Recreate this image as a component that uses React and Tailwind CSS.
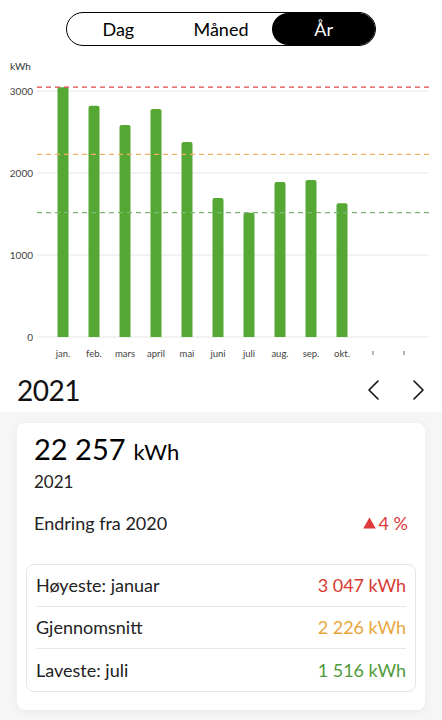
import { useState } from 'react';

const months = [
    { label: 'jan.', value: 3047 },
    { label: 'feb.', value: 2820 },
    { label: 'mars', value: 2585 },
    { label: 'april', value: 2780 },
    { label: 'mai', value: 2378 },
    { label: 'juni', value: 1695 },
    { label: 'juli', value: 1516 },
    { label: 'aug.', value: 1890 },
    { label: 'sep.', value: 1915 },
    { label: 'okt.', value: 1631 },
    { label: '', value: null },
    { label: '', value: null },
];

const ZERO = 337;
const SCALE = 0.082;
const yOf = (v) => ZERO - v * SCALE;

const font = { fontFamily: 'Lato, "Open Sans", sans-serif' };

function Chart() {
    return (
        <svg width="442" height="312" viewBox="0 56 442 312" className="block">
            <text x="10" y="70" fontSize="10" fill="#333">kWh</text>
            {[0, 1000, 2000, 3000].map((t) => (
                <g key={t}>
                    <line x1="37" x2="429" y1={yOf(t)} y2={yOf(t)} stroke="#e6e6e6" strokeWidth="1" />
                    <text x="33" y={yOf(t) + 3.5} fontSize="10" fill="#444" textAnchor="end">{t}</text>
                </g>
            ))}
            {months.map((m, i) => {
                const cx = 63 + i * 31;
                return (
                    <g key={i}>
                        {m.value && (
                            <path
                                d={`M${cx - 5.5} ${ZERO} V${yOf(m.value) + 2} Q${cx - 5.5} ${yOf(m.value)} ${cx - 3.5} ${yOf(m.value)} H${cx + 3.5} Q${cx + 5.5} ${yOf(m.value)} ${cx + 5.5} ${yOf(m.value) + 2} V${ZERO} Z`}
                                fill="#55a834"
                            />
                        )}
                        {m.label ? (
                            <text x={cx} y="357" fontSize="9.5" fill="#444" textAnchor="middle">{m.label}</text>
                        ) : (
                            <line x1={cx} x2={cx} y1="351" y2="355" stroke="#666" strokeWidth="1" />
                        )}
                    </g>
                );
            })}
            <line x1="37" x2="429" y1={yOf(3047)} y2={yOf(3047)} stroke="#e0464a" strokeWidth="1.3" strokeDasharray="5 4" />
            <line x1="37" x2="429" y1={yOf(2226)} y2={yOf(2226)} stroke="#f0b060" strokeWidth="1.3" strokeDasharray="5 4" />
            <line x1="37" x2="429" y1={yOf(1516)} y2={yOf(1516)} stroke="#7fb67a" strokeWidth="1.3" strokeDasharray="5 4" />
        </svg>
    );
}

function Chevron({ dir }) {
    return (
        <svg width="14" height="22" viewBox="0 0 14 22" fill="none" stroke="#111" strokeWidth="1.6" strokeLinecap="round" strokeLinejoin="round">
            {dir === 'left' ? <path d="M12 2L3 11l9 9" /> : <path d="M2 2l9 9-9 9" />}
        </svg>
    );
}

function StatRow({ label, value, color, last }) {
    return (
        <div className={`flex items-center justify-between h-[42px] ${last ? '' : 'border-b border-[#e8e8e8]'}`}>
            <span className="text-[18px] text-[#222]">{label}</span>
            <span className={`text-[18px] ${color}`}>{value}</span>
        </div>
    );
}

export default function App() {
    const [period, setPeriod] = useState('År');

    return (
        <div className="w-[442px] h-[720px] bg-[#f6f6f6] overflow-hidden" style={font}>
            <div className="bg-white">
                <div className="pt-3 flex justify-center">
                    <div className="flex w-[310px] h-[34px] rounded-full border-[1.5px] border-black">
                        {['Dag', 'Måned', 'År'].map((p) => (
                            <button
                                key={p}
                                onClick={() => setPeriod(p)}
                                className={`flex-1 rounded-full text-[18px] leading-none ${period === p ? 'bg-black text-white' : 'text-black'}`}
                            >
                                {p}
                            </button>
                        ))}
                    </div>
                </div>
                <div className="mt-[10px]">
                    <Chart />
                </div>
                <div className="flex items-center justify-between pl-[17px] pr-[16px] h-[44px]">
                    <span className="text-[28px] text-[#111] tracking-[-0.5px]">2021</span>
                    <div className="flex items-center gap-[32px]">
                        <Chevron dir="left" />
                        <Chevron dir="right" />
                    </div>
                </div>
            </div>

            <div className="mx-[17px] mt-[11px] bg-white rounded-lg shadow-[0_2px_10px_rgba(0,0,0,0.06)] pt-[10px] pb-[18px] px-[9px]">
                <div className="px-[8px]">
                    <div className="flex items-baseline gap-[8px]">
                        <span className="text-[29px] leading-[32px] text-black">22 257</span>
                        <span className="text-[22px] leading-[32px] text-black">kWh</span>
                    </div>
                    <div className="mt-[2px] text-[17px] leading-[24px] text-[#222]">2021</div>
                    <div className="mt-[17px] flex items-center justify-between text-[18px] leading-[24px]">
                        <span className="text-[#222]">Endring fra 2020</span>
                        <span className="text-[#e0393a] flex items-center gap-[3px]">
                            <svg width="13" height="12" viewBox="0 0 13 12"><path d="M6.5 0.5L12.8 11.5H0.2Z" fill="#e0393a" /></svg>
                            4 %
                        </span>
                    </div>
                </div>
                <div className="mt-[29px] border border-[#e6e6e6] rounded-lg px-[9px]">
                    <StatRow label="Høyeste: januar" value="3 047 kWh" color="text-[#d93a32]" />
                    <StatRow label="Gjennomsnitt" value="2 226 kWh" color="text-[#e8a640]" />
                    <StatRow label="Laveste: juli" value="1 516 kWh" color="text-[#4f9b3c]" last />
                </div>
            </div>
        </div>
    );
}
